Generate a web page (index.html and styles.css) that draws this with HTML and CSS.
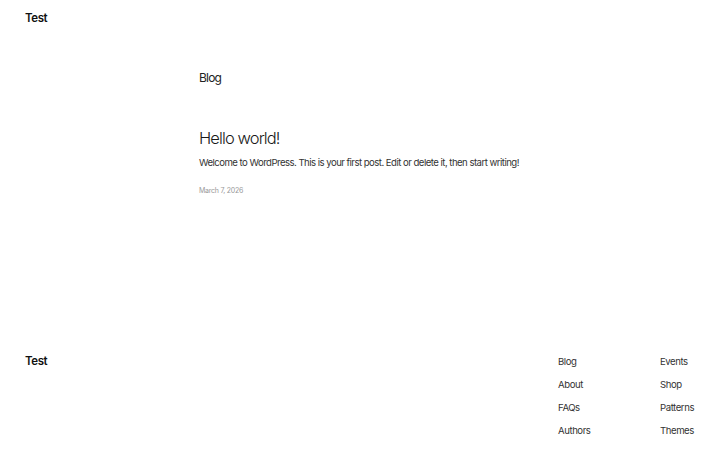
FILE: index.html
```html
<!DOCTYPE html>
<html lang="en">
<head>
<meta charset="utf-8">
<title>Test</title>
<link rel="stylesheet" href="styles.css">
</head>
<body>
<header class="site-header">
  <a class="site-title" href="#">Test</a>
</header>
<main class="main">
  <h1 class="page-title">Blog</h1>
  <article class="post">
    <h2 class="post-title">Hello world!</h2>
    <p class="post-excerpt">Welcome to WordPress. This is your first post. Edit or delete it, then start writing!</p>
    <div class="post-date">March 7, 2026</div>
  </article>
</main>
<footer class="site-footer">
  <a class="site-title" href="#">Test</a>
  <nav class="footer-nav">
    <ul class="nav-col">
      <li><a href="#">Blog</a></li>
      <li><a href="#">About</a></li>
      <li><a href="#">FAQs</a></li>
      <li><a href="#">Authors</a></li>
    </ul>
    <ul class="nav-col">
      <li><a href="#">Events</a></li>
      <li><a href="#">Shop</a></li>
      <li><a href="#">Patterns</a></li>
      <li><a href="#">Themes</a></li>
    </ul>
  </nav>
</footer>
</body>
</html>
```

FILE: styles.css
```css
* { box-sizing: border-box; }
html, body { margin: 0; padding: 0; }
body {
  font-family: Inter, "Noto Sans", sans-serif;
  color: #111;
  background: #fff;
  width: 720px;
  height: 450px;
  overflow: hidden;
}
a { color: inherit; text-decoration: none; }
.site-header {
  padding: 10px 25px 0;
  height: 36px;
}
.site-title {
  font-size: 11.5px;
  font-weight: 600;
  line-height: 16px;
  letter-spacing: -0.4px;
  display: block;
}
.main {
  padding-left: 199px;
  height: 240px;
}
.page-title {
  margin: 34px 0 0;
  font-size: 12px;
  font-weight: 400;
  line-height: 16px;
  letter-spacing: -0.8px;
  color: #222;
}
.post { margin-top: 41px; }
.post-title {
  margin: 0;
  font-size: 16.5px;
  font-weight: 300;
  line-height: 22px;
  letter-spacing: -0.9px;
  color: #1a1a1a;
}
.post-excerpt {
  margin: 7px 0 0;
  font-size: 9.6px;
  line-height: 14px;
  letter-spacing: -0.53px;
  color: #333;
}
.post-date {
  margin-top: 16px;
  font-size: 7px;
  line-height: 10px;
  color: #999;
  letter-spacing: -0.25px;
}
.site-footer {
  display: flex;
  justify-content: space-between;
  align-items: flex-start;
  padding: 43px 26px 0 25px;
}
.footer-nav {
  display: flex;
  margin-top: 2px;
}
.nav-col {
  list-style: none;
  margin: 0;
  padding: 0;
}
.nav-col:first-child { width: 102px; }
.nav-col li {
  font-size: 9.6px;
  line-height: 14px;
  margin-bottom: 9px;
  letter-spacing: -0.45px;
  color: #333;
}
```
